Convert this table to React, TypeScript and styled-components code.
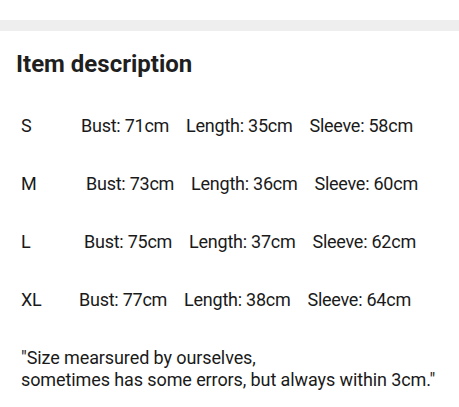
import React from "react";
import styled, { createGlobalStyle } from "styled-components";

const Global = createGlobalStyle`
  html, body { margin: 0; padding: 0; background: #ffffff; }
  body { font-family: Roboto, "Noto Sans", sans-serif; color: #1a1a1a; }
`;

const Page = styled.div`
  width: 459px;
  height: 407px;
  background: #ffffff;
  padding-top: 20px;
  box-sizing: border-box;
`;

const Divider = styled.div`
  height: 11px;
  background: #eeeeee;
`;

const Section = styled.section`
  padding: 18px 0 0 16px;
`;

const Title = styled.h2`
  margin: 0;
  font-size: 24px;
  font-weight: 700;
  line-height: 31px;
  color: #1f1f1f;
`;

const Table = styled.div`
  display: flex;
  flex-direction: column;
  margin-top: 33px;
  padding-left: 5px;
  gap: 33px;
`;

const Row = styled.div`
  display: flex;
  align-items: center;
  height: 25px;
  font-size: 18px;
  letter-spacing: -0.25px;
  color: #1a1a1a;
`;

const SizeLabel = styled.span<{ $width: number }>`
  width: ${(p) => p.$width}px;
  flex: none;
`;

const Measures = styled.span`
  display: flex;
  gap: 17px;
  white-space: nowrap;
`;

const Note = styled.p`
  margin: 35px 0 0 5px;
  font-size: 18px;
  line-height: 22px;
  letter-spacing: -0.1px;
  color: #1a1a1a;
`;

const rows = [
  { size: "S", indent: 60, bust: 71, length: 35, sleeve: 58 },
  { size: "M", indent: 65, bust: 73, length: 36, sleeve: 60 },
  { size: "L", indent: 63, bust: 75, length: 37, sleeve: 62 },
  { size: "XL", indent: 58, bust: 77, length: 38, sleeve: 64 },
];

export default function App() {
  return (
    <Page>
      <Global />
      <Divider />
      <Section>
        <Title>Item description</Title>
        <Table>
          {rows.map((r) => (
            <Row key={r.size}>
              <SizeLabel $width={r.indent}>{r.size}</SizeLabel>
              <Measures>
                <span>Bust: {r.bust}cm</span>
                <span>Length: {r.length}cm</span>
                <span>Sleeve: {r.sleeve}cm</span>
              </Measures>
            </Row>
          ))}
        </Table>
        <Note>
          "Size mearsured by ourselves,
          <br />
          sometimes has some errors, but always within 3cm."
        </Note>
      </Section>
    </Page>
  );
}
